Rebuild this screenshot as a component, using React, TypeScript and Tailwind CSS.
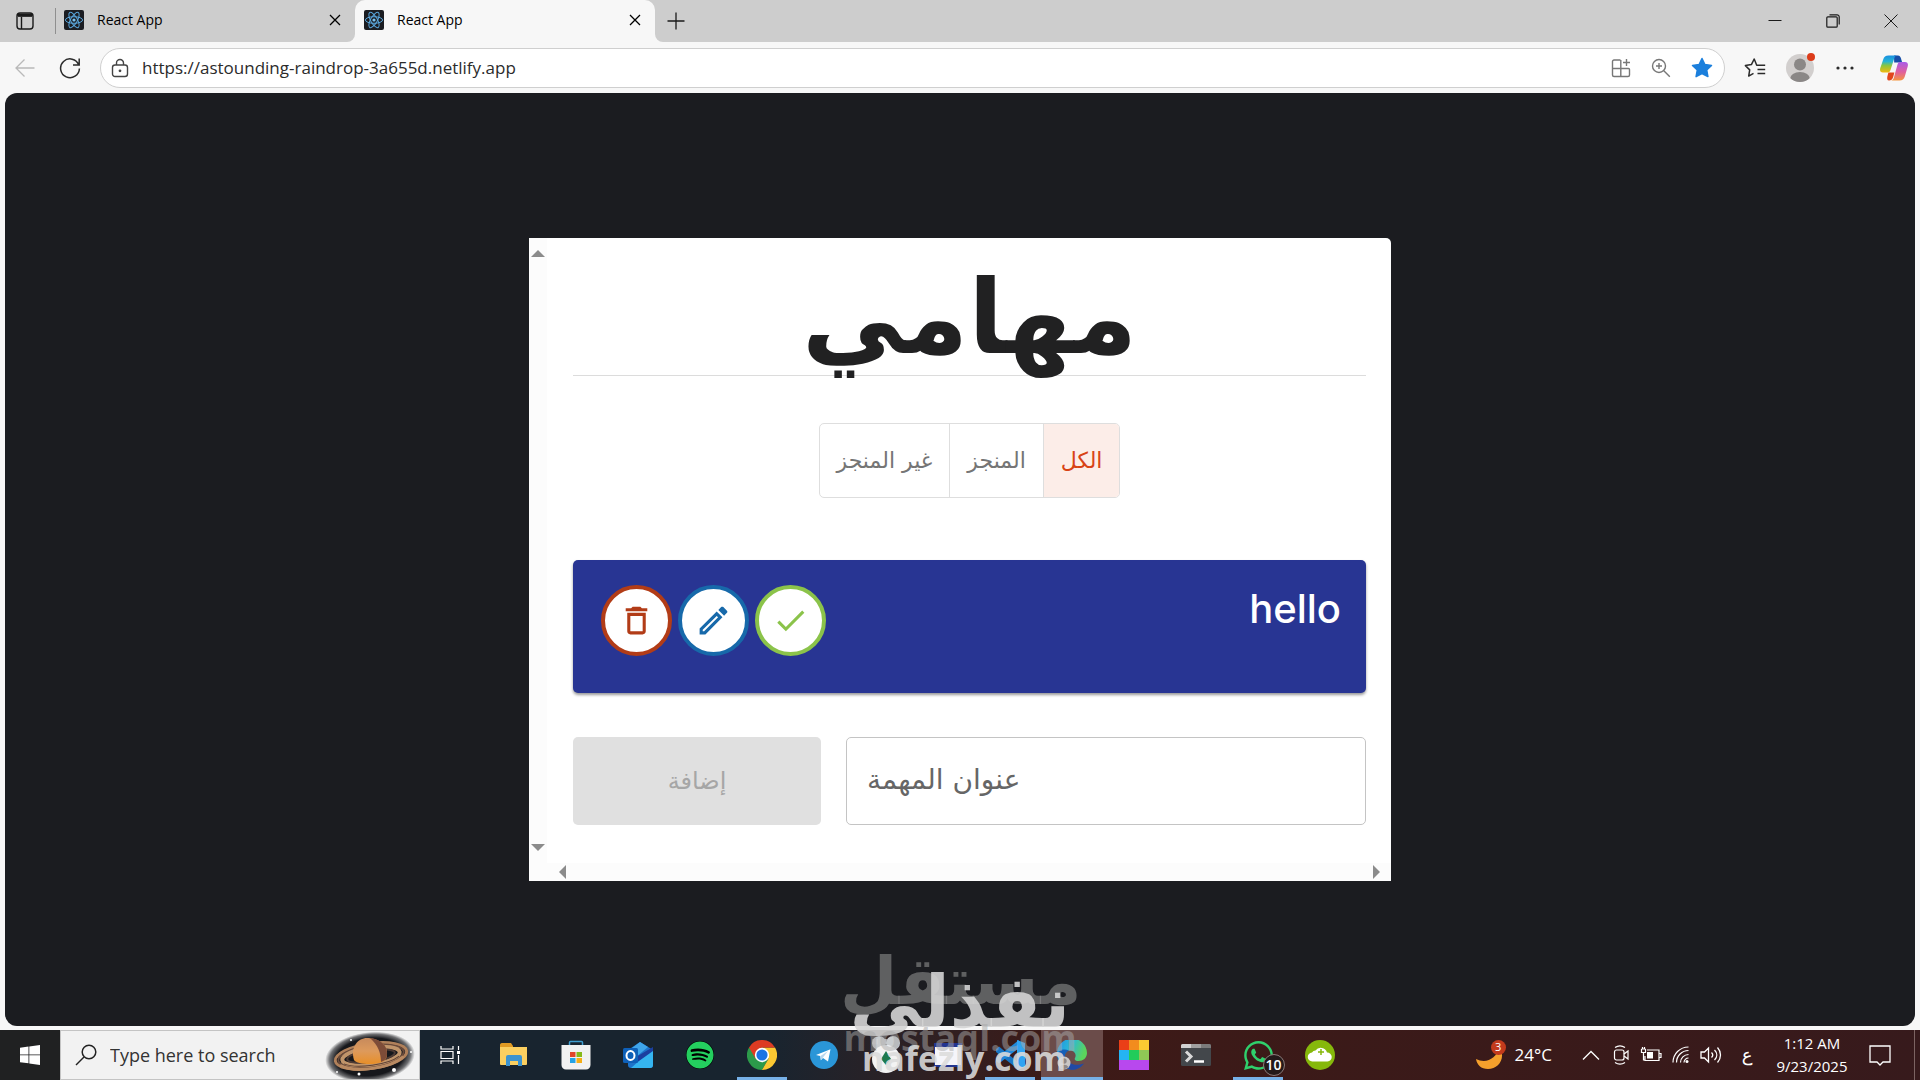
import React, { useState } from "react";
import { FaSpotify, FaWhatsapp } from "react-icons/fa";

interface IconProps {
  className?: string;
}

interface BrowserTabProps {
  title: string;
  active: boolean;
}

interface Filter {
  id: string;
  label: string;
}

const filters: Filter[] = [
  { id: "all", label: "الكل" },
  { id: "completed", label: "المنجز" },
  { id: "non-completed", label: "غير المنجز" },
];

const paths = {
  delete:
    "M6 19c0 1.1.9 2 2 2h8c1.1 0 2-.9 2-2V7H6v12zM8 9h8v10H8V9zm7.5-5l-1-1h-5l-1 1H5v2h14V4z",
  edit: "m14.06 9.02.92.92L5.92 19H5v-.92l9.06-9.06M17.66 3c-.25 0-.51.1-.7.29l-1.83 1.83 3.75 3.75 1.83-1.83c.39-.39.39-1.02 0-1.41l-2.34-2.34c-.2-.2-.45-.29-.71-.29zm-3.6 3.19L3 17.25V21h3.75L17.81 9.94l-3.75-3.75z",
  check: "M9 16.17 4.83 12l-1.42 1.41L9 19 21 7l-1.41-1.41z",
};

function ReactLogo({ className }: IconProps): React.ReactElement {
  return (
    <svg viewBox="0 0 20 20" className={className} fill="none">
      <rect width="20" height="20" rx="2" fill="#1b1d22" />
      <g stroke="#5aa6dc" strokeWidth="1">
        <ellipse cx="10" cy="10" rx="8.6" ry="3.3" />
        <ellipse cx="10" cy="10" rx="8.6" ry="3.3" transform="rotate(60 10 10)" />
        <ellipse cx="10" cy="10" rx="8.6" ry="3.3" transform="rotate(120 10 10)" />
      </g>
      <circle cx="10" cy="10" r="1.6" fill="#7cc4f2" />
    </svg>
  );
}

function CloseIcon({ className }: IconProps): React.ReactElement {
  return (
    <svg viewBox="0 0 12 12" className={className} fill="none" stroke="currentColor" strokeWidth="1.3">
      <path d="M1 1l10 10M11 1L1 11" />
    </svg>
  );
}

function BrowserTab({ title, active }: BrowserTabProps): React.ReactElement {
  return (
    <div
      className={`relative flex items-center w-[300px] h-full pl-[9px] pr-3.5 pb-0.5 text-black ${
        active ? "bg-[#f7f7f7] rounded-t-[10px]" : ""
      }`}
    >
      {active && (
        <>
          <span className="absolute bottom-0 -left-2 size-2 bg-[#f7f7f7]">
            <span className="block size-2 rounded-br-lg bg-[#cdcdcd]" />
          </span>
          <span className="absolute bottom-0 -right-2 size-2 bg-[#f7f7f7]">
            <span className="block size-2 rounded-bl-lg bg-[#cdcdcd]" />
          </span>
        </>
      )}
      <ReactLogo className="size-5" />
      <span className="flex-1 ml-[13px] text-sm">{title}</span>
      <button aria-label="Close tab">
        <CloseIcon className="size-3" />
      </button>
    </div>
  );
}

function TitleBar(): React.ReactElement {
  return (
    <div className="flex items-center h-[42px] bg-[#cdcdcd] text-[#1a1a1a]">
      <button className="w-[50px] flex justify-center" aria-label="Tab actions">
        <svg viewBox="0 0 18 18" className="size-[18px]" fill="none" stroke="currentColor" strokeWidth="1.4">
          <rect x="1" y="1" width="16" height="16" rx="3" />
          <path d="M1.5 3.5h15M5.5 5v12" />
          <path d="M2 3.2h14" strokeWidth="3.2" />
        </svg>
      </button>
      <span className="w-px h-[26px] ml-[5px] -mr-px bg-[#8f8f8f]" />
      <BrowserTab title="React App" active={false} />
      <BrowserTab title="React App" active />
      <button className="ml-[11px] px-px" aria-label="New tab">
        <svg viewBox="0 0 18 18" className="size-[18px]" fill="none" stroke="currentColor" strokeWidth="1.3">
          <path d="M9 .5v17M.5 9h17" />
        </svg>
      </button>
      <div className="flex-1" />
      <button className="w-[58px] flex justify-center" aria-label="Minimize">
        <svg viewBox="0 0 14 14" className="size-3.5" stroke="currentColor">
          <path d="M.5 6.5h13" />
        </svg>
      </button>
      <button className="w-[58px] flex justify-center" aria-label="Restore">
        <svg viewBox="0 0 14 14" className="size-3.5" fill="none" stroke="currentColor" strokeWidth="1.2">
          <rect x=".8" y="2.8" width="10.4" height="10.4" rx="1" />
          <path d="M3.5 .8H11a2.2 2.2 0 0 1 2.2 2.2v7.5" />
        </svg>
      </button>
      <button className="w-[58px] flex justify-center" aria-label="Close">
        <svg viewBox="0 0 14 14" className="size-3.5" stroke="currentColor">
          <path d="M.5 .5l13 13M13.5 .5l-13 13" />
        </svg>
      </button>
    </div>
  );
}

function Toolbar(): React.ReactElement {
  return (
    <div className="flex items-center h-[51px] bg-[#f7f7f7] text-[#2b2b2b]">
      <button className="w-[50px] flex justify-center text-[#b9b9b9]" aria-label="Back">
        <svg viewBox="0 0 20 20" className="size-5" fill="none" stroke="currentColor" strokeWidth="1.3">
          <path d="M19.5 10H1M9.5 1.5L1 10l8.5 8.5" />
        </svg>
      </button>
      <button className="w-[40px] flex justify-center" aria-label="Refresh">
        <svg viewBox="0 0 22 22" className="size-[22px]" fill="none" stroke="currentColor" strokeWidth="1.5">
          <path d="M19.8 8A9.4 9.4 0 1 0 20.4 11.5M20.2 1.5V8h-6.2" />
        </svg>
      </button>
      <div className="flex items-center flex-1 h-10 ml-2.5 pl-2.5 pr-[11px] rounded-full border border-[#cfcfcf] bg-white">
        <svg viewBox="0 0 18 20" className="w-[18px] h-5 text-[#444]" fill="none" stroke="currentColor" strokeWidth="1.4">
          <rect x="1.5" y="7" width="15" height="11.5" rx="2.5" />
          <path d="M5.5 7V5a3.5 3.5 0 0 1 7 0v2" />
          <circle cx="9" cy="12.8" r=".7" fill="currentColor" />
        </svg>
        <input
          type="text"
          aria-label="Address"
          defaultValue="https://astounding-raindrop-3a655d.netlify.app"
          className="flex-1 ml-[13px] text-[17px] outline-none bg-transparent"
        />
        <div className="flex items-center gap-5">
          <button aria-label="App available" className="text-[#777]">
            <svg viewBox="0 0 20 20" className="size-5" fill="none" stroke="currentColor" strokeWidth="1.4">
              <path d="M9.5 2H3a1.5 1.5 0 0 0-1.5 1.5V17A1.5 1.5 0 0 0 3 18.5h14a1.5 1.5 0 0 0 1.5-1.5v-5.5a1 1 0 0 0-1-1h-16M9.8 2v16.5M15.5 1v7M12 4.5h7" />
            </svg>
          </button>
          <button aria-label="Zoom" className="text-[#777]">
            <svg viewBox="0 0 20 20" className="size-5" fill="none" stroke="currentColor" strokeWidth="1.4">
              <circle cx="8" cy="8" r="6.5" />
              <path d="M12.8 12.8l6 6M8 5v6M5 8h6" />
            </svg>
          </button>
          <button aria-label="Favorite">
            <svg viewBox="0 0 22 22" className="size-[22px]" fill="#1b7fdc" stroke="#1b7fdc" strokeLinejoin="round" strokeWidth="1.5">
              <path d="M11 1.5l2.9 6 6.6.9-4.8 4.6 1.2 6.6-5.9-3.1-5.9 3.1 1.2-6.6L1.5 8.4l6.6-.9z" />
            </svg>
          </button>
        </div>
      </div>
      <button className="w-[45px] ml-[7px] flex justify-center" aria-label="Favorites">
        <svg viewBox="0 0 22 22" className="size-[22px]" fill="none" stroke="currentColor" strokeLinejoin="round" strokeWidth="1.5">
          <path d="M14.5 8.2h-1.8L10.2 2 7.4 7.6l-6 1 4.3 4.3-1 6.2 4.8-2.7M12.7 8.2h8.5M13.5 12.4h7.7M13.5 16.6h7.7" />
        </svg>
      </button>
      <button className="w-[45px] flex justify-center" aria-label="Profile">
        <span className="relative">
          <svg viewBox="0 0 28 28" className="size-7">
            <clipPath id="avatar">
              <circle cx="14" cy="14" r="14" />
            </clipPath>
            <g clipPath="url(#avatar)">
              <rect width="28" height="28" fill="#d2cfce" />
              <circle cx="14" cy="10.5" r="6" fill="#8a8786" />
              <ellipse cx="14" cy="25" rx="10" ry="7" fill="#8a8786" />
            </g>
          </svg>
          <span className="absolute -top-px -right-px size-2 rounded-full bg-[#dc3c1a]" />
        </span>
      </button>
      <button className="w-[45px] flex justify-center" aria-label="Settings and more">
        <svg viewBox="0 0 18 4" className="w-[18px] h-1" fill="currentColor">
          <circle cx="2" cy="2" r="1.6" />
          <circle cx="9" cy="2" r="1.6" />
          <circle cx="16" cy="2" r="1.6" />
        </svg>
      </button>
      <button className="w-[53px] flex justify-center" aria-label="Copilot">
        <svg viewBox="0 0 28 26" className="w-7 h-[26px]">
          <defs>
            <linearGradient id="cpLeft" x1="0" y1="0" x2="0" y2="1">
              <stop offset="0" stopColor="#1a8fe0" />
              <stop offset=".35" stopColor="#25b5d6" />
              <stop offset=".6" stopColor="#8cc63e" />
              <stop offset="1" stopColor="#f2b90f" />
            </linearGradient>
            <linearGradient id="cpRight" x1="0" y1="0" x2="0" y2="1">
              <stop offset="0" stopColor="#a95be8" />
              <stop offset=".55" stopColor="#e0609c" />
              <stop offset="1" stopColor="#f5953e" />
            </linearGradient>
          </defs>
          <path d="M14 .5h4c1.5 0 2.4 1 3 3l1.200 4h-8z" fill="#174ea8" />
          <path d="M9 25.5c-2 0-2-2-1.600-4l1-4h6l-1.400 5c-.7 2-2 3-4 3z" fill="#e2461c" />
          <path d="M8.5.5H17c-1.500 0-2.200 1-2.700 2.500L10.500 15c-.7 2-1.500 2.500-3.500 2.500H3C.3 17.500-.4 15.500.3 13L3.200 4.500C4 2 5.500.5 8.500.5z" fill="url(#cpLeft)" />
          <path d="M19.500 25.500H11c1.500 0 2.300-1 2.800-2.500L17.500 9.500c.7-2 1.500-2.500 3.500-2.500h4c2.700 0 3.400 2 2.700 4.500L24.800 21.500c-.8 2.500-2.300 4-5.300 4z" fill="url(#cpRight)" />
        </svg>
      </button>
    </div>
  );
}

function TodoCard(): React.ReactElement {
  const [filter, setFilter] = useState<string>("all");
  const [title, setTitle] = useState<string>("");

  return (
    <section
      dir="rtl"
      className="w-full max-w-[862px] rounded-t-[5px] rounded-tl-none bg-white font-['DejaVu_Sans',sans-serif]"
    >
      <div className="flex">
        <div className="flex-1 pr-[25px] pl-[26px] pb-[38px]">
          <header className="h-[138px] border-b border-[#dcdcdc] text-center">
            <h1 className="pt-5 text-[102px] leading-[120px] font-bold text-[#212122]">مهامي</h1>
          </header>

          {/* Filters */}
          <div className="flex justify-center mt-[47px]">
            <div className="flex h-[75px] rounded-[5px] border border-[#dedede] overflow-hidden">
              {filters.map((item) => (
                <button
                  key={item.id}
                  aria-pressed={filter === item.id}
                  onClick={() => setFilter(item.id)}
                  className={`px-[17px] text-[22px] border-l border-[#dedede] last:border-l-0 ${
                    filter === item.id
                      ? "bg-[#fcede8] text-[#d84315]"
                      : "text-[#757575]"
                  }`}
                >
                  {item.label}
                </button>
              ))}
            </div>
          </div>

          {/* Task */}
          <article className="flex justify-between h-[133px] mt-[62px] py-[25px] pr-[25px] pl-7 rounded-[5px] bg-[#283593] shadow-[0_2px_3px_rgba(0,0,0,0.4)]">
            <h2 className="font-['Inter',sans-serif] font-medium text-[40px] leading-[48px] text-white">
              hello
            </h2>
            <div className="flex gap-1.5">
              <button
                aria-label="Complete"
                className="flex items-center justify-center size-[71px] rounded-full border-4 border-[#8bc34a] bg-white text-[#8bc34a]"
              >
                <svg viewBox="0 0 24 24" className="size-[37px]" fill="currentColor">
                  <path d={paths.check} />
                </svg>
              </button>
              <button
                aria-label="Edit"
                className="flex items-center justify-center size-[71px] rounded-full border-4 border-[#1769aa] bg-white text-[#1769aa]"
              >
                <svg viewBox="0 0 24 24" className="size-[37px]" fill="currentColor">
                  <path d={paths.edit} />
                </svg>
              </button>
              <button
                aria-label="Delete"
                className="flex items-center justify-center size-[71px] rounded-full border-4 border-[#b23c17] bg-white text-[#b23c17]"
              >
                <svg viewBox="0 0 24 24" className="size-[37px]" fill="currentColor">
                  <path d={paths.delete} />
                </svg>
              </button>
            </div>
          </article>

          {/* New task */}
          <form
            className="flex gap-[25px] mt-[44px]"
            onSubmit={(e) => e.preventDefault()}
          >
            <input
              type="text"
              dir="ltr"
              aria-label="عنوان المهمة"
              placeholder="عنوان المهمة"
              value={title}
              onChange={(e) => setTitle(e.target.value)}
              className="flex-1 min-w-0 h-[88px] px-5 pb-1 rounded-[5px] border border-[#c4c4c4] text-[28px] outline-none placeholder:text-[#666]"
            />
            <button
              disabled={!title}
              className="w-[248px] h-[88px] rounded-[5px] bg-[#e0e0e0] text-2xl text-[#a6a6a6]"
            >
              إضافة
            </button>
          </form>
        </div>

        {/* Vertical scrollbar */}
        <div className="flex flex-col justify-between items-center w-[18px] py-3 bg-[#fcfcfc] text-[#8b8b8b]">
          <svg viewBox="0 0 14 7" className="w-3.5 h-[7px]" fill="currentColor">
            <path d="M0 7L7 0l7 7z" />
          </svg>
          <svg viewBox="0 0 14 7" className="w-3.5 h-[7px]" fill="currentColor">
            <path d="M0 0h14L7 7z" />
          </svg>
        </div>
      </div>

      {/* Horizontal scrollbar */}
      <div className="flex justify-between items-center h-[18px] pr-[11px] pl-[30px] bg-[#fcfcfc] text-[#8b8b8b]">
        <svg viewBox="0 0 7 14" className="w-[7px] h-3.5" fill="currentColor">
          <path d="M0 0l7 7-7 7z" />
        </svg>
        <svg viewBox="0 0 7 14" className="w-[7px] h-3.5" fill="currentColor">
          <path d="M7 0v14L0 7z" />
        </svg>
      </div>
    </section>
  );
}

function Saturn(): React.ReactElement {
  return (
    <svg viewBox="0 0 94 48" className="w-[94px] h-12">
      <defs>
        <radialGradient id="space">
          <stop offset=".75" stopColor="#17181c" />
          <stop offset=".9" stopColor="#17181c" stopOpacity=".6" />
          <stop offset="1" stopColor="#17181c" stopOpacity="0" />
        </radialGradient>
        <linearGradient id="planet" x1="0" y1="0" x2="0" y2="1">
          <stop offset="0" stopColor="#c78a5c" />
          <stop offset=".5" stopColor="#dd9a5c" />
          <stop offset="1" stopColor="#e88f28" />
        </linearGradient>
      </defs>
      <ellipse cx="45" cy="26" rx="45" ry="25" fill="url(#space)" transform="rotate(-6 45 26)" />
      <g fill="none" transform="rotate(-8 46 25)">
        <ellipse cx="46" cy="25" rx="36" ry="12.5" stroke="#b0805a" strokeWidth="3" />
        <ellipse cx="46" cy="25" rx="33" ry="10.5" stroke="#6a4a3a" strokeWidth="2" />
        <ellipse cx="46" cy="25" rx="29" ry="8.5" stroke="#c0946a" strokeWidth="4" />
        <ellipse cx="46" cy="25" rx="24" ry="6" stroke="#4d3a33" strokeWidth="2" />
      </g>
      <path d="M29 29C25 16 33 7 42 7s21 5 20 17c-.5 6-5 8-14 9-9 .5-17-1-19-4z" fill="url(#planet)" />
      <path d="M45 7c10 1 18 7 17 17-.5 4-3 6-6 7 0-9-3-17-11-24z" fill="#7d4c38" />
      <g fill="none" transform="rotate(-8 46 25)">
        <path d="M14 30c14 10 50 10 64 0" stroke="#b98a62" strokeWidth="3" />
        <path d="M18 29c12 7 44 7 56 0" stroke="#5e4033" strokeWidth="1" />
      </g>
      <g fill="#fff">
        <circle cx="26" cy="9" r="1" />
        <circle cx="12" cy="41" r="1" />
        <circle cx="34" cy="43" r="1.5" />
        <circle cx="69" cy="39" r="2" />
        <circle cx="86" cy="21" r="1" />
      </g>
    </svg>
  );
}

function ExplorerIcon(): React.ReactElement {
  return (
    <svg viewBox="0 0 30 30" className="size-[30px]">
      <path d="M1 5c0-1 .5-2 2-2h9l2 3v3H1z" fill="#e09a23" />
      <path d="M1 7h27v17a1 1 0 0 1-1 1H2a1 1 0 0 1-1-1z" fill="#fbcf60" />
      <path d="M7 26V17a2 2 0 0 1 2-2h12a2 2 0 0 1 2 2v9h-4v-5h-8v5z" fill="#3c93cf" />
    </svg>
  );
}

function StoreIcon(): React.ReactElement {
  return (
    <svg viewBox="0 0 30 30" className="size-[30px]">
      <path d="M8.500 6V2.500a1 1 0 0 1 1-1h11a1 1 0 0 1 1 1V6" fill="none" stroke="#3f9ed0" strokeWidth="1.5" />
      <path d="M.5 5h29v20a4.500 4.500 0 0 1-4.500 4.500H5A4.500 4.500 0 0 1 .5 25z" fill="#f1f1f1" />
      <path d="M9 12h5.500v5H9z" fill="#e0452a" />
      <path d="M15.500 12H21v5h-5.500z" fill="#86b918" />
      <path d="M9 18h5.500v5H9z" fill="#23a2e6" />
      <path d="M15.500 18H21v5h-5.500z" fill="#f6ae14" />
    </svg>
  );
}

function OutlookIcon(): React.ReactElement {
  return (
    <svg viewBox="0 0 30 30" className="size-[30px]">
      <path d="M5 10L17 2l13 8v15a3 3 0 0 1-3 3H8a3 3 0 0 1-3-3z" fill="#1e73c9" />
      <path d="M5 11l12-9 8 5-12 10z" fill="#3fa5ea" />
      <path d="M13 17L30 7v5L15 22z" fill="#1b3f9f" />
      <path d="M30 11v14a3 3 0 0 1-3 3H8l8-7z" fill="#35b5f0" />
      <rect y="8" width="15" height="15" rx="1.5" fill="#0e60b8" />
      <ellipse cx="7.5" cy="15.5" rx="4" ry="4.5" fill="none" stroke="#fff" strokeWidth="2" />
    </svg>
  );
}

function ChromeIcon(): React.ReactElement {
  return (
    <svg viewBox="0 0 30 30" className="size-[30px]">
      <path d="M15 15l6.500 3.800L15 30A15 15 0 0 1 2 7.500z" fill="#2c9a4a" />
      <path d="M15 7.500h13A15 15 0 0 1 15 30l6.500-11.200z" fill="#fbc832" />
      <path d="M2 7.500A15 15 0 0 1 28 7.500H15l-6.500 11.200z" fill="#dd3b23" />
      <circle cx="15" cy="15" r="7.2" fill="#fff" />
      <circle cx="15" cy="15" r="5.6" fill="#1b74e4" />
    </svg>
  );
}

function TelegramIcon(): React.ReactElement {
  return (
    <svg viewBox="0 0 28 28" className="size-7">
      <circle cx="14" cy="14" r="14" fill="#2a96d8" />
      <path d="M6 14L20.500 8.300 18 20.500l-5-3.500-2.200 2.200-.6-4.200z" fill="#fff" />
      <path d="M10.500 15l7.500-5-5 6.500-2 2.500z" fill="#b9d8ee" />
    </svg>
  );
}

function CircleAppIcon(): React.ReactElement {
  return (
    <svg viewBox="0 0 30 38" className="w-[30px] h-[38px]">
      <circle cx="8" cy="7" r="7" fill="#c9cdd0" />
      <circle cx="22" cy="7" r="7" fill="#c9cdd0" />
      <circle cx="15" cy="23" r="14" fill="#f3f3f3" />
      <path d="M15 15l5 8-5 6-5-6z" fill="#1e7a4e" />
    </svg>
  );
}

function CalendarAppIcon(): React.ReactElement {
  return (
    <svg viewBox="0 0 28 24" className="w-7 h-6">
      <rect width="28" height="24" fill="#23358f" />
      <rect x="1" y="4" width="26" height="18" fill="#f5f5fa" />
    </svg>
  );
}

function CodeIcon(): React.ReactElement {
  return (
    <svg viewBox="0 0 30 30" className="size-[30px]">
      <path d="M1 9l3-2.500L24 23v7L1 12z" fill="#1976c5" />
      <path d="M1 21l3 2.500L24 8V0L1 18z" fill="#2089db" />
      <path d="M22 0l8 3v24l-8 3z" fill="#2fa3f2" />
    </svg>
  );
}

function EdgeIcon(): React.ReactElement {
  return (
    <svg viewBox="0 0 30 30" className="size-[30px]">
      <defs>
        <linearGradient id="edgeTop" x1="0" y1="0" x2="1" y2=".3">
          <stop offset="0" stopColor="#1e8fe2" />
          <stop offset=".5" stopColor="#2ab8d8" />
          <stop offset="1" stopColor="#5bd45c" />
        </linearGradient>
      </defs>
      <path d="M0 14A15 15 0 0 1 30 13c0 5-4 8-8.500 8-3 0-4.500-1.500-3.500-3 2-4-1-7.500-5-7.500C7 10.500 2 13 0 18z" fill="url(#edgeTop)" />
      <path d="M0 15c1-5 7-7 12-4.500-5 2-6 9 0 14 5 3.500 11 2 15-1A15 15 0 0 1 0 15z" fill="#1560b8" />
      <path d="M10 16c0 7 7 11 17 7.500-4 5-9 7-13 6.200C8 27 8 20 10 16z" fill="#2149a5" />
      <circle cx="7" cy="23" r="6.5" fill="#c9c6c4" />
      <circle cx="7" cy="21" r="2.7" fill="#8d8887" />
      <path d="M2.500 27a5 4 0 0 1 9 0 6 6 0 0 1-9 0z" fill="#8d8887" />
    </svg>
  );
}

function TilesIcon(): React.ReactElement {
  return (
    <svg viewBox="0 0 30 30" className="size-[30px]">
      <path d="M0 0h10v10H0z" fill="#ea3f17" />
      <path d="M10 0h10v10H10z" fill="#f28c1e" />
      <path d="M20 0h10v10H20z" fill="#fbcb32" />
      <path d="M0 10h10v10H0z" fill="#25b4f3" />
      <path d="M10 10h10v10H10z" fill="#22cc5a" />
      <path d="M20 10h10v10H20z" fill="#8fc855" />
      <path d="M0 20h30v10H0z" fill="#b848ee" />
    </svg>
  );
}

function TerminalIcon(): React.ReactElement {
  return (
    <svg viewBox="0 0 30 24" className="w-[30px] h-6">
      <rect y="1" width="30" height="22" rx="1.5" fill="#43474b" />
      <path d="M0 2.500A1.500 1.500 0 0 1 1.500 1H10v4H0z" fill="#d2d2d2" />
      <path d="M10 1h10v4H10z" fill="#a0a0a0" />
      <path d="M20 1h8.500A1.500 1.500 0 0 1 30 2.500V5H20z" fill="#7b7b7b" />
      <path d="M5 8.500l5 5-5 5" fill="none" stroke="#d9d9d9" strokeWidth="3" />
      <path d="M13 18.500h10" stroke="#fff" strokeWidth="2.5" />
    </svg>
  );
}

function WhatsappIcon(): React.ReactElement {
  return (
    <span className="relative">
      <FaWhatsapp className="size-[33px] text-[#2fd06c]" />
      <span className="absolute -right-2.5 -bottom-1 flex items-center justify-center size-[22px] rounded-full border border-[#8b7b7a] bg-[#241a1a] text-sm font-semibold text-white">
        10
      </span>
    </span>
  );
}

function CloudIcon(): React.ReactElement {
  return (
    <svg viewBox="0 0 30 30" className="size-[30px]">
      <circle cx="15" cy="15" r="15" fill="#86b80b" />
      <path d="M7.500 21.500a4.500 4.500 0 0 1-.5-9 4 4 0 0 1 3.500-2A6.500 6.500 0 0 1 22 12.500a4.500 4.500 0 0 1 .5 9z" fill="#fff" />
      <path d="M16 9v6M13 12h6" stroke="#86b80b" strokeWidth="1.5" />
    </svg>
  );
}

interface TaskbarApp {
  name: string;
  icon: React.ReactElement;
  running?: boolean;
  focused?: boolean;
}

const apps: TaskbarApp[] = [
  { name: "File Explorer", icon: <ExplorerIcon /> },
  { name: "Microsoft Store", icon: <StoreIcon /> },
  { name: "Outlook", icon: <OutlookIcon /> },
  { name: "Spotify", icon: <FaSpotify className="size-7 rounded-full bg-black text-[#24cf5f]" /> },
  { name: "Google Chrome", icon: <ChromeIcon />, running: true },
  { name: "Telegram", icon: <TelegramIcon /> },
  { name: "Android", icon: <CircleAppIcon /> },
  { name: "Window", icon: <CalendarAppIcon /> },
  { name: "Visual Studio Code", icon: <CodeIcon />, running: true },
  { name: "Microsoft Edge", icon: <EdgeIcon />, running: true, focused: true },
  { name: "Tiles", icon: <TilesIcon /> },
  { name: "Terminal", icon: <TerminalIcon /> },
  { name: "WhatsApp", icon: <WhatsappIcon />, running: true },
  { name: "Cloud", icon: <CloudIcon /> },
];

function SystemTray(): React.ReactElement {
  return (
    <div className="flex items-center h-full text-white">
      <button className="flex items-center mr-6">
        <span className="relative mr-2.5">
          <svg viewBox="0 0 30 30" className="size-[30px]">
            <path d="M25 7c6 12-2 22-12 22C6 29 2 25 1 19c10 5 20 0 24-12z" fill="#f5a02c" />
          </svg>
          <span className="absolute top-0 -right-px flex items-center justify-center size-[15px] rounded-full bg-[#c23a1c] text-[11px]">
            3
          </span>
        </span>
        <span className="text-[17px]">24°C</span>
      </button>
      <button className="mr-3 ml-1.5" aria-label="Show hidden icons">
        <svg viewBox="0 0 18 10" className="w-[18px] h-2.5" fill="none" stroke="currentColor" strokeWidth="1.3">
          <path d="M1 9.500l8-8 8 8" />
        </svg>
      </button>
      <div className="flex items-center gap-2.5">
        <svg viewBox="0 0 18 20" className="w-[18px] h-5" fill="none" stroke="currentColor" strokeWidth="1.2">
          <rect x="2.5" y="5" width="9.5" height="10" rx="2" />
          <path d="M12 9l4-3v8l-4-3M3 2.500c3-2 7-2 10 0M3 17.500c3 2 7 2 10 0" />
        </svg>
        <svg viewBox="0 0 22 16" className="w-[22px] h-4" fill="none" stroke="currentColor" strokeWidth="1.2">
          <path d="M7 3h12v10.500H5V9M19.500 6.500h1.500v4h-1.500M1.500 2v3.500h4V2M1.500 2h4M2.500 0v2M4.500 0v2M3.500 5.500V13h2" />
          <path d="M7 5h6v6.500H7z" fill="currentColor" stroke="none" />
        </svg>
        <svg viewBox="0 0 18 18" className="size-[18px]" fill="none" stroke="currentColor" strokeWidth="1.2">
          <path d="M1 16.500A15.500 15.500 0 0 1 16.500 1M4.500 16.500a12 12 0 0 1 12-12M8.500 16.500a8 8 0 0 1 8-8M12 16.500a4.500 4.500 0 0 1 4.500-4.500" />
          <circle cx="15" cy="15.5" r="1.5" fill="currentColor" stroke="none" />
        </svg>
        <svg viewBox="0 0 22 18" className="w-[22px] h-[18px]" fill="none" stroke="currentColor" strokeWidth="1.3">
          <path d="M1 6h3.500L8.500 2v14l-4-4H1zM11.500 6.500c1.500 1.500 1.500 3.500 0 5M14.500 4c3 3 3 7 0 10M17.500 1.500c4 4.500 4 10.500 0 15" />
        </svg>
      </div>
      <span className="w-[50px] text-center text-lg font-['DejaVu_Sans',sans-serif]">ع</span>
      <div className="w-20 text-center text-[15px] leading-[23px]">
        <p>1:12 AM</p>
        <p>9/23/2025</p>
      </div>
      <button className="mx-[17px]" aria-label="Notifications">
        <svg viewBox="0 0 22 22" className="size-[22px]" fill="none" stroke="currentColor" strokeWidth="1.3">
          <path d="M1 2h20v16h-7l-3 3-3-3H1z" />
        </svg>
      </button>
      <span className="w-px h-full mr-[5px] ml-1.5 bg-[#7c6362]" />
    </div>
  );
}

function Taskbar(): React.ReactElement {
  return (
    <footer className="flex items-center h-[50px] bg-linear-to-r from-[#18242f] from-40% via-[#3d1a17] via-55% to-[#371a1c]">
      <button className="w-[60px] h-full flex items-center justify-center bg-[#202122]" aria-label="Start">
        <svg viewBox="0 0 20 20" className="size-5" fill="#fff">
          <path d="M0 2.700L8.500 1.500v8H0zM9.300 1.400L20 0v9.500H9.300zM0 10.300h8.500v8L0 17.200zM9.300 10.300H20V20L9.300 18.500z" />
        </svg>
      </button>
      <label className="flex items-center w-[360px] h-full pl-3.5 border border-[#c4c4c4] bg-[#f2f2f2]">
        <svg viewBox="0 0 22 22" className="size-[22px]" fill="none" stroke="#222" strokeWidth="1.5">
          <circle cx="14" cy="8" r="6.8" />
          <path d="M9 13l-8 8" />
        </svg>
        <input
          type="text"
          aria-label="Search"
          placeholder="Type here to search"
          className="flex-1 min-w-0 ml-[13px] text-lg outline-none placeholder:text-[#333]"
        />
        <Saturn />
      </label>
      <button className="w-[63px] h-full flex items-center justify-center" aria-label="Task view">
        <svg viewBox="0 0 20 20" className="size-5 mr-1" fill="none" stroke="#fff" strokeWidth="1.2">
          <path d="M1 1v3h12V1M1 19v-3h12v3M1 6.500h12v7H1zM18.500 1v4M18.500 10v9" />
          <path d="M17 6h3v3h-3z" fill="#fff" stroke="none" />
        </svg>
      </button>
      {apps.map((app) => (
        <button
          key={app.name}
          aria-label={app.name}
          className={`relative flex items-center justify-center w-[62px] h-full ${
            app.focused ? "bg-[#6b4c4a]" : ""
          }`}
        >
          {app.icon}
          {app.running && (
            <span
              className={`absolute bottom-0 h-[3px] bg-[#76b1e8] ${
                app.focused ? "inset-x-0" : "inset-x-1.5"
              }`}
            />
          )}
        </button>
      ))}
      <div className="flex-1" />
      <SystemTray />
    </footer>
  );
}

function Watermark(): React.ReactElement {
  return (
    <div className="absolute bottom-0 left-1/2 w-[240px] h-[140px] -translate-x-1/2 pointer-events-none text-center font-bold whitespace-nowrap">
      <p className="absolute inset-x-0 top-0 text-[66px] leading-[84px] text-[#8e8e8e]/60 font-['DejaVu_Sans',sans-serif]">
        مستقل
      </p>
      <p className="absolute inset-x-0 top-5 text-[72px] leading-[84px] text-[#d4d4d4]/90 font-['DejaVu_Sans',sans-serif]">
        نفذلي
      </p>
      <p className="absolute inset-x-0 top-20 text-[36px] leading-[36px] text-[#a8a8a8]/50">
        mostaql.com
      </p>
      <p className="absolute inset-x-0 bottom-1 pl-2 text-[34px] leading-[36px] text-[#dcdcdc]/90">
        nafezly.com
      </p>
    </div>
  );
}

function App(): React.ReactElement {
  return (
    <div className="relative flex flex-col min-h-screen overflow-hidden bg-[#f7f7f7] font-['Open_Sans',sans-serif]">
      <TitleBar />
      <Toolbar />
      <main className="flex flex-1 items-center justify-center mx-[5px] mb-1 rounded-xl bg-[#1b1c20]">
        <TodoCard />
      </main>
      <Taskbar />
      <Watermark />
    </div>
  );
}

export default App;
